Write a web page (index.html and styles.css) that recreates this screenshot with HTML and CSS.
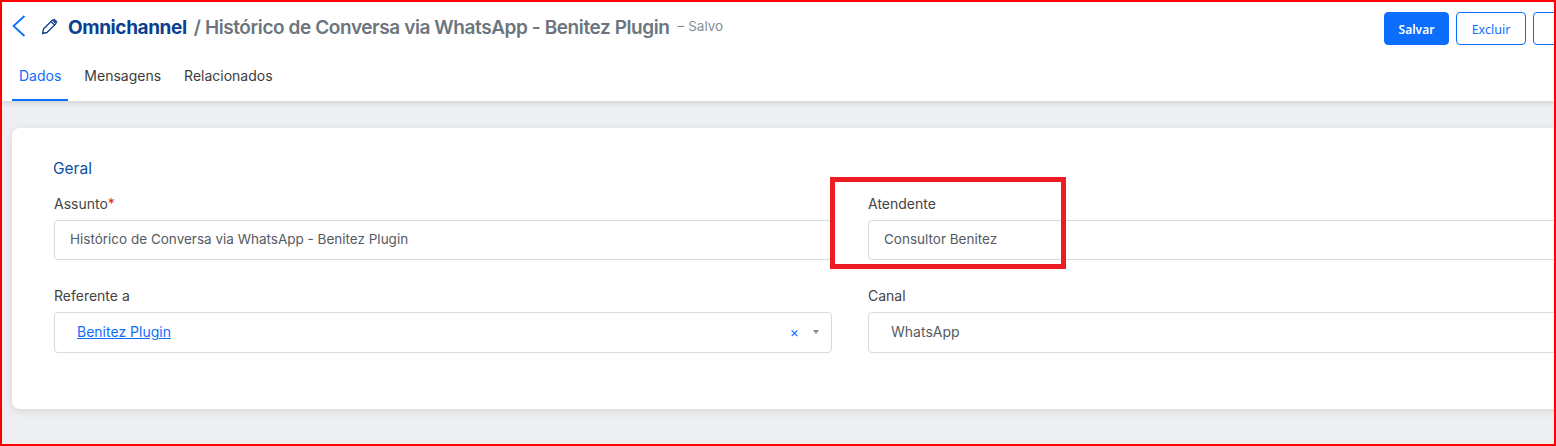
FILE: index.html
```html
<!DOCTYPE html>
<html lang="pt-BR">
<head>
<meta charset="utf-8">
<title>Omnichannel</title>
<link rel="stylesheet" href="styles.css">
</head>
<body>
<div class="frame">
  <header class="header">
    <div class="top">
      <div class="crumbs">
        <svg class="back" width="14" height="22" viewBox="0 0 14 22"><path d="M12.500 1 1.500 11l11 10" fill="none" stroke="#0d6efd" stroke-width="1.800"/></svg>
        <svg class="pencil" width="17" height="17" viewBox="0 0 17 17"><path d="M1.500 15.500l1-4.500L11.500 2l3.500 3.500-9 9z M10 3.500l3.500 3.500" fill="none" stroke="#0b3f8f" stroke-width="1.300" stroke-linejoin="round"/><path d="M12 1.500l1.200-1 3.300 3.300-1 1.200z" fill="#0b3f8f"/></svg>
        <span class="module">Omnichannel</span>
        <span class="title">/ Histórico de Conversa via WhatsApp - Benitez Plugin</span>
        <span class="status">– Salvo</span>
      </div>
      <div class="actions">
        <button class="btn primary">Salvar</button>
        <button class="btn outline">Excluir</button>
        <button class="btn outline wide"></button>
      </div>
    </div>
    <nav class="tabs">
      <a class="tab active">Dados</a>
      <a class="tab">Mensagens</a>
      <a class="tab">Relacionados</a>
    </nav>
  </header>
  <main class="content">
    <section class="card">
      <h2 class="section-title">Geral</h2>
      <div class="grid">
        <div class="field">
          <label class="label">Assunto<span class="req">*</span></label>
          <div class="input text">Histórico de Conversa via WhatsApp - Benitez Plugin</div>
        </div>
        <div class="field">
          <label class="label">Atendente</label>
          <div class="input text">Consultor Benitez</div>
        </div>
        <div class="field">
          <label class="label">Referente a</label>
          <div class="input select">
            <a class="link">Benitez Plugin</a>
            <span class="clear">×</span>
            <span class="caret"></span>
          </div>
        </div>
        <div class="field">
          <label class="label">Canal</label>
          <div class="input select plain">WhatsApp</div>
        </div>
      </div>
    </section>
  </main>
  <div class="highlight"></div>
</div>
</body>
</html>
```

FILE: styles.css
```css
* { box-sizing: border-box; }
html, body { margin: 0; padding: 0; }
body { width: 1556px; height: 446px; overflow: hidden; font-family: "Inter", "Liberation Sans", sans-serif; }
.frame { position: relative; width: 1556px; height: 446px; border: 2px solid #ff0000; background: #eeeff1; overflow: hidden; display: flex; flex-direction: column; }
.header { flex: none; width: 1552px; height: 99px; background: #fff; box-shadow: 0 1px 6px rgba(0,0,0,.16); position: relative; padding-left: 10px; }
.top { display: flex; justify-content: space-between; height: 49px; }
.crumbs { display: flex; align-items: flex-start; padding-top: 13px; }
.back { margin-right: 16px; }
.pencil { margin: 3px 10px 0 -1px; }
.module { font-size: 19px; font-weight: 700; letter-spacing: -0.4px; color: #0b3f8f; line-height: 26px; margin-right: 7px; }
.title { font-size: 19px; font-weight: 600; letter-spacing: -0.41px; color: #6c757d; line-height: 26px; margin-right: 8px; }
.status { font-size: 13.500px; color: #868e96; line-height: 22px; }
.actions { display: flex; gap: 7px; padding-top: 10px; width: 170px; flex: none; }
.btn { height: 33px; border-radius: 4px; font-family: "Noto Sans", "Liberation Sans", sans-serif; font-size: 12.500px; line-height: 16px; padding: 2px 0 0; flex: none; }
.primary { width: 65px; background: #0d6efd; border: 1px solid #0d6efd; color: #fff; font-weight: 600; font-size: 12px; }
.outline { width: 70px; background: #fff; border: 1px solid #0d6efd; color: #0d6efd; }
.wide { width: 70px; }
.tabs { display: flex; height: 50px; }
.tab { display: block; height: 50px; padding: 15px 7px 0; font-size: 14px; line-height: 20px; color: #3d3d3d; margin-right: 9px; font-family: "Inter", sans-serif; }
.tab.active { color: #0d6efd; border-bottom: 2px solid #0d6efd; }
.content { flex: 1; padding: 27px 0 0 10px; }
.card { width: 1680px; height: 281px; background: #fff; border-radius: 8px; box-shadow: 0 2px 10px rgba(0,0,0,.1); padding: 31px 0 0 41px; }
.section-title { margin: 0; font-size: 15.500px; font-weight: 400; line-height: 20px; color: #0b4ea2; }
.grid { display: grid; grid-template-columns: 778px 778px; column-gap: 36px; row-gap: 26px; padding: 15px 0 0 1px; }
.field { display: flex; flex-direction: column; gap: 6px; }
.label { font-size: 14px; line-height: 20px; color: #444; font-family: "Inter", sans-serif; }
.req { color: #e5252a; }
.input { height: 40px; border: 1px solid #d9dadd; border-radius: 4px; background: #fff; display: flex; align-items: center; font-size: 13.500px; color: #555b61; font-family: "Inter", sans-serif; padding-bottom: 2px; }
.text { padding-left: 15px; }
.select { height: 41px; padding: 0 12px 2px 22px; font-size: 14px; }
.link { color: #0d6efd; text-decoration: underline; flex: 1; }
.clear { color: #0d6efd; font-size: 14px; margin-right: 14px; }
.caret { width: 0; height: 0; border-left: 3.500px solid transparent; border-right: 3.500px solid transparent; border-top: 4px solid #888; }
.highlight { position: absolute; left: 828px; top: 175px; width: 236px; height: 92px; border: 5px solid #ed1c24; pointer-events: none; }
```
